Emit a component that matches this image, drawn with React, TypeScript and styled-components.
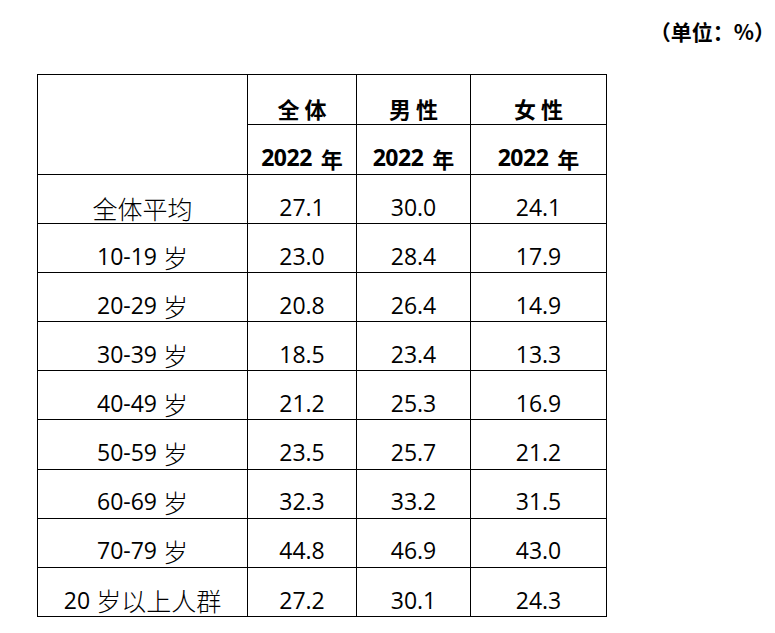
import React from "react";
import styled, { createGlobalStyle } from "styled-components";

const GlobalStyle = createGlobalStyle`
  html, body { margin: 0; padding: 0; background: #fff; }
  body { font-family: "Open Sans", "Noto Sans CJK SC", sans-serif; color: #000; }
`;

const Page = styled.div`
  width: 775px;
  height: 633px;
  box-sizing: border-box;
  padding: 14px 0 0 37px;
  display: flex;
  flex-direction: column;
`;

const Unit = styled.div`
  align-self: flex-end;
  font-family: "Noto Sans CJK SC", sans-serif;
  font-weight: 700;
  font-size: 21px;
  line-height: 34px;
  height: 34px;
`;

const Grid = styled.div`
  margin-top: 26px;
  display: grid;
  grid-template-columns: 209px 108px 113px 135px;
  grid-template-rows: 49px 49px repeat(9, 48.1px);
  gap: 1px;
  padding: 1px;
  background: #000;
  width: max-content;
`;

const Cell = styled.div<{ $span?: number; $bold?: boolean }>`
  background: #fff;
  grid-row: ${(p) => (p.$span ? `span ${p.$span}` : "auto")};
  display: flex;
  align-items: center;
  justify-content: center;
  padding-top: 17px;
  box-sizing: border-box;
  font-family: "Open Sans", "Noto Sans CJK SC", sans-serif;
  font-size: 23px;
  font-weight: ${(p) => (p.$bold ? 700 : 400)};
  white-space: pre;
  line-height: 1.2;
`;

const HeadCjk = styled.span`
  font-family: "Noto Sans CJK SC", sans-serif;
  font-weight: 700;
  font-size: 22px;
  letter-spacing: 5px;
  padding-left: 5px;
`;

const Cjk = styled.span<{ $bold?: boolean }>`
  font-family: "Noto Sans CJK SC", sans-serif;
  font-weight: ${(p) => (p.$bold ? 700 : 300)};
  font-size: ${(p) => (p.$bold ? "22px" : "25px")};
  margin-left: ${(p) => (p.$bold ? "4px" : "0")};
`;

const YearNum = styled.span`
  font-family: "Open Sans", sans-serif;
  font-weight: 700;
  font-size: 23px;
  letter-spacing: -0.5px;
`;

type Row = { label: React.ReactNode; values: string[] };

const rows: Row[] = [
  { label: <Cjk>全体平均</Cjk>, values: ["27.1", "30.0", "24.1"] },
  { label: <>10-19 <Cjk>岁</Cjk></>, values: ["23.0", "28.4", "17.9"] },
  { label: <>20-29 <Cjk>岁</Cjk></>, values: ["20.8", "26.4", "14.9"] },
  { label: <>30-39 <Cjk>岁</Cjk></>, values: ["18.5", "23.4", "13.3"] },
  { label: <>40-49 <Cjk>岁</Cjk></>, values: ["21.2", "25.3", "16.9"] },
  { label: <>50-59 <Cjk>岁</Cjk></>, values: ["23.5", "25.7", "21.2"] },
  { label: <>60-69 <Cjk>岁</Cjk></>, values: ["32.3", "33.2", "31.5"] },
  { label: <>70-79 <Cjk>岁</Cjk></>, values: ["44.8", "46.9", "43.0"] },
  { label: <>20 <Cjk>岁以上人群</Cjk></>, values: ["27.2", "30.1", "24.3"] },
];

const groups = ["全体", "男性", "女性"];

export default function App() {
  return (
    <>
      <GlobalStyle />
      <Page>
        <Unit>（单位：%）</Unit>
        <Grid>
          <Cell $span={2} />
          {groups.map((g) => (
            <Cell key={g}>
              <HeadCjk>{g}</HeadCjk>
            </Cell>
          ))}
          {groups.map((g) => (
            <Cell key={g + "y"} $bold>
              <YearNum>2022</YearNum>
              <Cjk $bold> 年</Cjk>
            </Cell>
          ))}
          {rows.map((r, i) => (
            <React.Fragment key={i}>
              <Cell>{r.label}</Cell>
              {r.values.map((v, j) => (
                <Cell key={j}>{v}</Cell>
              ))}
            </React.Fragment>
          ))}
        </Grid>
      </Page>
    </>
  );
}
